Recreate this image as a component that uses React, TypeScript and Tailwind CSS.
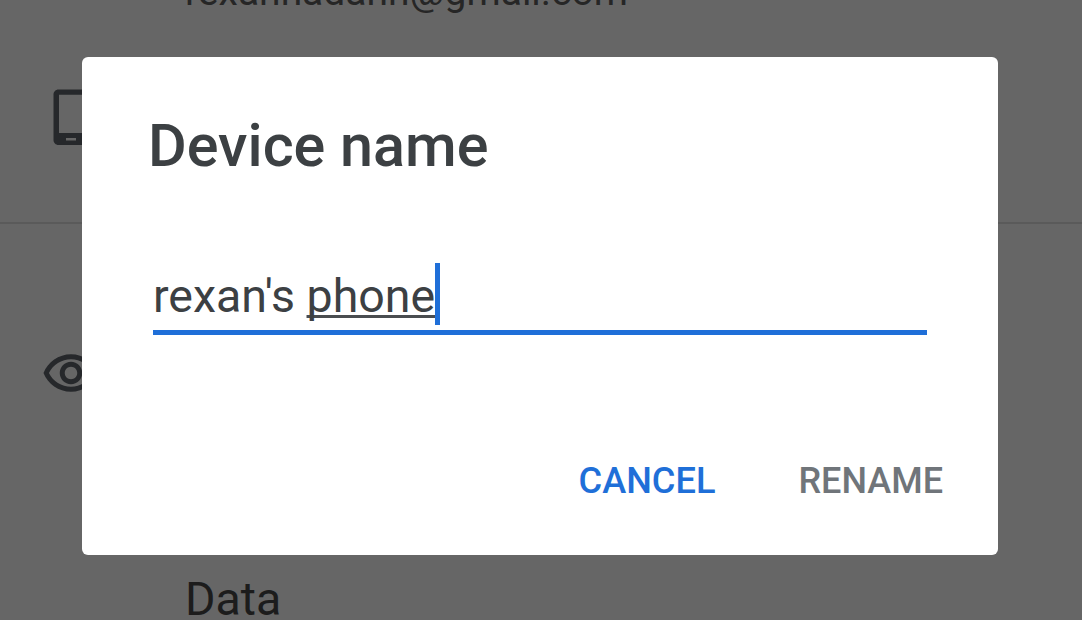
export default function App() {
  return (
    <div className="relative flex h-[620px] w-[1082px] flex-col overflow-hidden bg-[#666666] font-['Roboto',sans-serif]">
      <div className="flex h-[224px] shrink-0 flex-col border-b-2 border-[#5a5a5a]">
        <p className="mt-[-31px] whitespace-nowrap pl-[185px] text-[39px] leading-[46px] text-[#262626]">rexanhadahn@gmail.com</p>
        <svg className="ml-[41px] mt-[72px] h-[60px] w-[60px]" viewBox="0 0 24 24" fill="#26282b">
          <path fillRule="evenodd" d="M17 1H7C5.900 1 5 1.900 5 3v18.200c0 1.100.9 2 2 2h10c1.100 0 2-.9 2-2V3c0-1.100-.9-2-2-2zM7.200 3.100h9.600v15.300H7.200zM10 20.400h4v1h-4z" />
        </svg>
      </div>
      <svg className="ml-[41px] mt-[119px] h-[60px] w-[60px] shrink-0" viewBox="0 0 24 24" fill="#26282b">
        <path d="M12 6.500c3.790 0 7.170 2.130 8.820 5.500-1.650 3.370-5.020 5.500-8.820 5.500S4.830 15.370 3.180 12C4.830 8.630 8.210 6.500 12 6.500m0-2C7 4.500 2.730 7.610 1 12c1.730 4.390 6 7.500 11 7.500s9.270-3.110 11-7.500c-1.730-4.390-6-7.500-11-7.500zm0 5c1.380 0 2.500 1.120 2.500 2.500s-1.120 2.500-2.500 2.500-2.500-1.120-2.500-2.500 1.120-2.500 2.500-2.500m0-2c-2.480 0-4.500 2.020-4.500 4.500s2.020 4.500 4.500 4.500 4.500-2.020 4.500-4.500-2.020-4.500-4.500-4.500z" />
      </svg>
      <p className="mt-[169px] shrink-0 pl-[185px] text-[46.5px] leading-[54px] text-[#1c1c1c]">Data</p>

      <div className="absolute left-[82px] top-[57px] flex h-[498px] w-[916px] flex-col rounded-[6px] bg-white">
        <h2 className="pl-[66px] pt-[54px] text-[59.3px] font-medium leading-[70px] text-[#3c4043]">Device name</h2>
        <div className="mx-[71px] mt-[76px] flex h-[78px] items-start border-b-[5px] border-[#1f6fd8]">
          <span className="mt-[12px] whitespace-nowrap text-[46.5px] leading-[54px] text-[#3c4043]">
            rexan's <span className="underline decoration-[#4a4d50] decoration-[3px] underline-offset-[3px] [text-decoration-skip-ink:none]">phone</span>
          </span>
          <span className="mt-[6px] h-[62px] w-[5px] bg-[#1f6fd8]" />
        </div>
        <div className="mt-[125px] flex justify-end gap-[83px] pr-[55px]">
          <span className="text-[36.2px] font-medium leading-[42px] text-[#1f6fd8]">CANCEL</span>
          <span className="text-[36px] font-medium leading-[42px] text-[#70757a]">RENAME</span>
        </div>
      </div>
    </div>
  );
}
